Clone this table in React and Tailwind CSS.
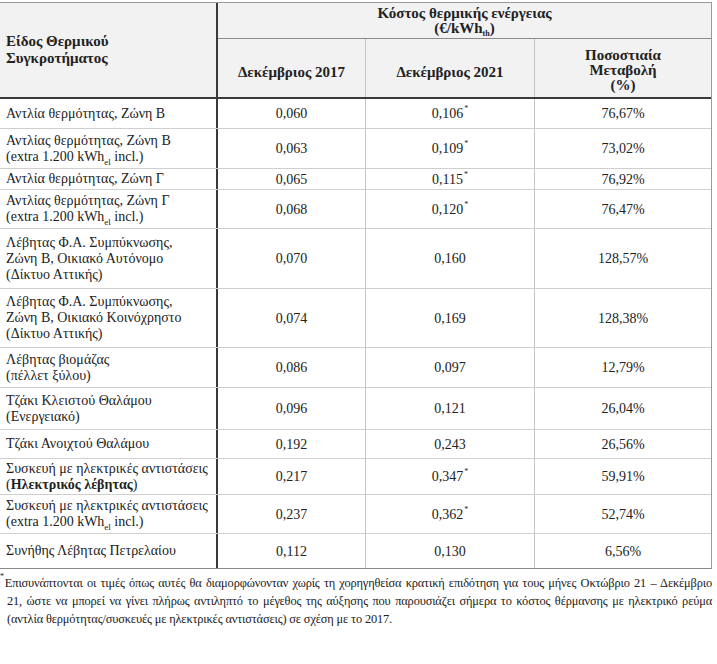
const el = <sub className="text-[9px] leading-none align-[-2px]">el</sub>;

const rows = [
  { h: 'h-[30px]', label: <>Αντλία θερμότητας, Ζώνη Β</>, a: '0,060', b: '0,106', star: true, p: '76,67%' },
  { h: 'h-[40px]', label: <>Αντλίας θερμότητας, Ζώνη Β<br />(extra 1.200 kWh{el} incl.)</>, a: '0,063', b: '0,109', star: true, p: '73,02%' },
  { h: 'h-[21px]', label: <>Αντλία θερμότητας, Ζώνη Γ</>, a: '0,065', b: '0,115', star: true, p: '76,92%' },
  { h: 'h-[39px]', label: <>Αντλίας θερμότητας, Ζώνη Γ<br />(extra 1.200 kWh{el} incl.)</>, a: '0,068', b: '0,120', star: true, p: '76,47%' },
  { h: 'h-[60px]', label: <>Λέβητας Φ.Α. Συμπύκνωσης,<br />Ζώνη Β, Οικιακό Αυτόνομο<br />(Δίκτυο Αττικής)</>, a: '0,070', b: '0,160', p: '128,57%' },
  { h: 'h-[59px]', label: <>Λέβητας Φ.Α. Συμπύκνωσης,<br />Ζώνη Β, Οικιακό Κοινόχρηστο<br />(Δίκτυο Αττικής)</>, a: '0,074', b: '0,169', p: '128,38%' },
  { h: 'h-[40px]', label: <>Λέβητας βιομάζας<br />(πέλλετ ξύλου)</>, a: '0,086', b: '0,097', p: '12,79%' },
  { h: 'h-[42px]', label: <>Τζάκι Κλειστού Θαλάμου<br />(Ενεργειακό)</>, a: '0,096', b: '0,121', p: '26,04%' },
  { h: 'h-[29px]', label: <>Τζάκι Ανοιχτού Θαλάμου</>, a: '0,192', b: '0,243', p: '26,56%' },
  { h: 'h-[36px]', label: <>Συσκευή με ηλεκτρικές αντιστάσεις<br />(<b>Ηλεκτρικός λέβητας</b>)</>, a: '0,217', b: '0,347', star: true, p: '59,91%' },
  { h: 'h-[39px]', label: <>Συσκευή με ηλεκτρικές αντιστάσεις<br />(extra 1.200 kWh{el} incl.)</>, a: '0,237', b: '0,362', star: true, p: '52,74%' },
  { h: 'h-[35px]', label: <>Συνήθης Λέβητας Πετρελαίου</>, a: '0,112', b: '0,130', p: '6,56%', last: true },
];

function Star() {
  return <sup className="text-[8px] leading-none align-[3px] ml-[1px]">*</sup>;
}

export default function App() {
  return (
    <div className="bg-white w-[717px] h-[664px] pt-[2px] text-[#222] font-['Liberation_Serif',serif] text-[14px]">
      <div className="w-[712px] border-t border-r border-[#9a9a9a]">
        <div className="flex h-[96px] bg-[#f2f2f2] border-b-2 border-[#3a3a3a] text-[15px]">
          <div className="w-[218px] border-r-2 border-[#3a3a3a] flex items-center pl-[6px] font-bold leading-[17px]">
            <div>Είδος Θερμικού<br />Συγκροτήματος</div>
          </div>
          <div className="flex-1 flex flex-col">
            <div className="h-[36px] border-b border-[#8a8a8a] flex flex-col items-center justify-center font-bold leading-[15px]">
              <div>Κόστος θερμικής ενέργειας</div>
              <div>(€/kWh<sub className="text-[8px] leading-none align-[-1px]">th</sub>)</div>
            </div>
            <div className="flex flex-1 font-bold">
              <div className="w-[148px] border-r border-[#c4c4c4] flex items-center justify-center pt-[8px]">Δεκέμβριος 2017</div>
              <div className="w-[169px] border-r border-[#c4c4c4] flex items-center justify-center pt-[8px]">Δεκέμβριος 2021</div>
              <div className="flex-1 flex items-center justify-center text-center leading-[15px] pt-[4px]">
                <div>Ποσοστιαία<br />Μεταβολή<br />(%)</div>
              </div>
            </div>
          </div>
        </div>
        {rows.map((r, i) => (
          <div key={i} className={`flex ${r.h} border-b ${r.last ? 'border-[#8a8a8a]' : 'border-[#cfcfcf]'}`}>
            <div className="w-[218px] border-r-2 border-[#3a3a3a] flex items-center pl-[6px] leading-[16px]">
              <div>{r.label}</div>
            </div>
            <div className="w-[148px] border-r border-[#c4c4c4] flex items-center justify-center">{r.a}</div>
            <div className="w-[169px] border-r border-[#c4c4c4] flex items-center justify-center">
              <span>{r.b}{r.star && <Star />}</span>
            </div>
            <div className="flex-1 flex items-center justify-center">{r.p}</div>
          </div>
        ))}
      </div>
      <div className="mt-[5px] w-[712px] text-[12.4px] tracking-[-0.15px] leading-[18px]">
        <div className="text-justify [text-align-last:justify]">
          <sup className="text-[8px] align-[4px] mr-[1px]">*</sup>Επισυνάπτονται οι τιμές όπως αυτές θα διαμορφώνονταν χωρίς τη χορηγηθείσα κρατική επιδότηση για τους μήνες Οκτώβριο 21 – Δεκέμβριο
        </div>
        <div className="pl-[7px] text-justify [text-align-last:justify]">
          21, ώστε να μπορεί να γίνει πλήρως αντιληπτό το μέγεθος της αύξησης που παρουσιάζει σήμερα το κόστος θέρμανσης με ηλεκτρικό ρεύμα
        </div>
        <div className="pl-[7px]">
          (αντλία θερμότητας/συσκευές με ηλεκτρικές αντιστάσεις) σε σχέση με το 2017.
        </div>
      </div>
    </div>
  );
}
